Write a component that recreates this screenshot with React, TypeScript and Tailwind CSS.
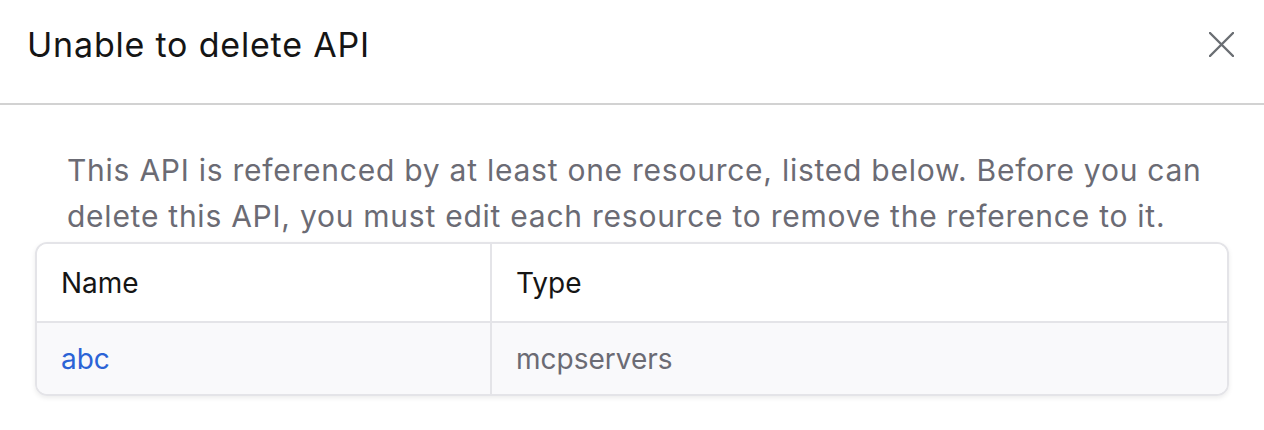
import React from "react";

export default function App() {
  return (
    <div className="w-[1264px] h-[430px] bg-white font-['Inter','Liberation_Sans',sans-serif] overflow-hidden">
      <div className="flex h-[105px] items-center justify-between border-b-2 border-[#d2d2d2] pl-[27px] pr-[30px] pb-[14px]">
        <h1 className="text-[34px] leading-[40px] tracking-[0.8px] font-normal text-[#151515]">Unable to delete API</h1>
        <button className="flex h-[25px] w-[25px] items-center justify-center" aria-label="Close">
          <svg width="25" height="25" viewBox="0 0 25 25" fill="none">
            <path d="M1 1 L24 24 M24 1 L1 24" stroke="#6a6e73" strokeWidth="2.4" strokeLinecap="round" />
          </svg>
        </button>
      </div>
      <div className="px-[35px] pt-[42px]">
        <p className="pl-[32px] pr-[10px] text-[30px] leading-[46px] tracking-[0.75px] text-[#6b6b74]">
          This API is referenced by at least one resource, listed below. Before you can delete this API, you must edit each resource to remove the reference to it.
        </p>
        <div className="mt-[3px] overflow-hidden rounded-[12px] border-2 border-[#e4e4e8] shadow-[0_2px_5px_rgba(0,0,0,0.08)]">
          <div className="flex h-[79px] border-b-2 border-[#e4e4e8] bg-white">
            <div className="flex w-[455px] items-center border-r-2 border-[#e4e4e8] pl-[24px] text-[28px] text-[#151515]">Name</div>
            <div className="flex flex-1 items-center pl-[24px] text-[28px] text-[#151515]">Type</div>
          </div>
          <div className="flex h-[71px] bg-[#f9f9fb]">
            <div className="flex w-[455px] items-center border-r-2 border-[#e4e4e8] pl-[24px] text-[28px] text-[#2b63d6]">abc</div>
            <div className="flex flex-1 items-center pl-[24px] text-[28px] text-[#6b6b74]">mcpservers</div>
          </div>
        </div>
      </div>
    </div>
  );
}
